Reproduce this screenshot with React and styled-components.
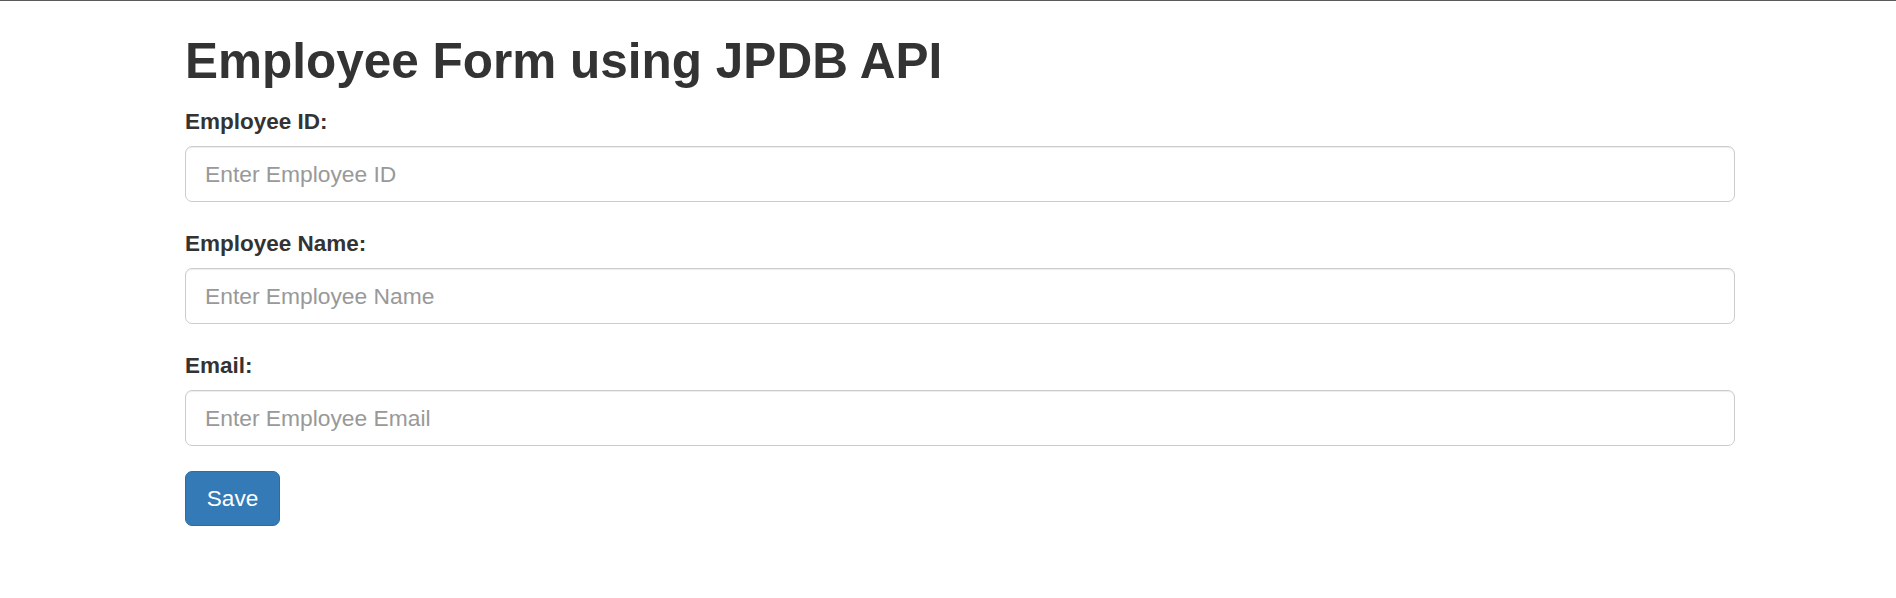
import React, { useState } from "react";
import styled, { createGlobalStyle } from "styled-components";

//........Global page styles...............
const GlobalStyle = createGlobalStyle`
  html, body {
    margin: 0;
    padding: 0;
    background: #fff;
  }
  body {
    font-family: "Liberation Sans", Arial, Helvetica, sans-serif;
    color: #333;
    border-top: 1px solid #5a5a5a;
  }
  * {
    box-sizing: border-box;
  }
`;

//........Custome this page...............
const Container = styled.div`
  width: 1550px;
  margin-left: 185px;
  padding-top: 33px;
`;

const Title = styled.h1`
  margin: 0 0 17px;
  font-size: 49.5px;
  line-height: 1.1;
  font-weight: 700;
  color: #333;
`;

const FormGroup = styled.div`
  display: flex;
  flex-direction: column;
  margin-bottom: 25px;
`;

const Label = styled.label`
  font-size: 22.5px;
  line-height: 33px;
  font-weight: 700;
  color: #333;
  margin-bottom: 8px;
`;

const Input = styled.input`
  width: 100%;
  height: 56px;
  padding: 0 19px;
  font-family: inherit;
  font-size: 22.8px;
  color: #555;
  background: #fff;
  border: 1px solid #ccc;
  border-radius: 7px;
  box-shadow: inset 0 1px 1px rgba(0, 0, 0, 0.075);
  outline: none;

  &::placeholder {
    color: #999;
  }
`;

const Button = styled.button`
  width: 95px;
  height: 55px;
  padding: 0;
  font-family: inherit;
  font-size: 22.6px;
  color: #fff;
  background-color: ${(p) => (p.primary ? "#337ab7" : "#fff")};
  border: 1px solid ${(p) => (p.primary ? "#2e6da4" : "#ccc")};
  border-radius: 7px;
  cursor: pointer;
`;

//.....JSX code...........................
const fields = [
  { id: "empId", label: "Employee ID:", placeholder: "Enter Employee ID" },
  { id: "empName", label: "Employee Name:", placeholder: "Enter Employee Name" },
  { id: "empEmail", label: "Email:", placeholder: "Enter Employee Email" },
];

function App() {
  const [values, setValues] = useState({});

  const handleChange = (e) => {
    setValues({ ...values, [e.target.id]: e.target.value });
  };

  return (
    <>
      <GlobalStyle />
      <Container>
        <Title>Employee Form using JPDB API</Title>
        <form onSubmit={(e) => e.preventDefault()}>
          {fields.map((f) => (
            <FormGroup key={f.id}>
              <Label htmlFor={f.id}>{f.label}</Label>
              <Input
                id={f.id}
                type="text"
                placeholder={f.placeholder}
                value={values[f.id] || ""}
                onChange={handleChange}
              />
            </FormGroup>
          ))}
          <Button primary type="submit">
            Save
          </Button>
        </form>
      </Container>
    </>
  );
}

export default App;
